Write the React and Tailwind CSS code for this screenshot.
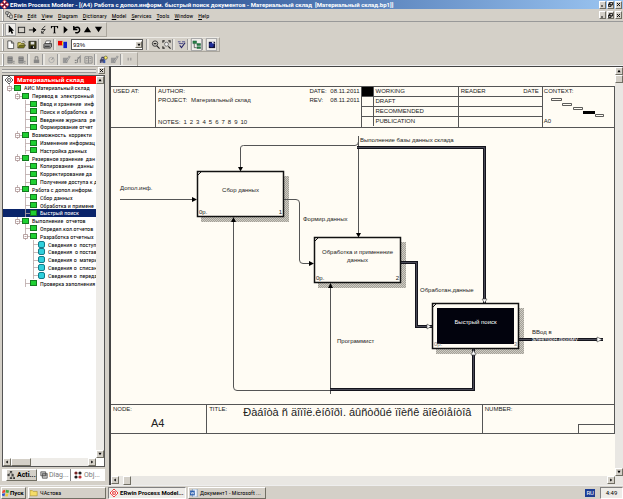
import React from 'react';

const raised = 'border border-t-white border-l-white border-r-[#716f64] border-b-[#716f64] bg-[#d4d0c8]';
const sunken = 'border border-t-[#808080] border-l-[#808080] border-r-white border-b-white bg-[#eeece8]';
const narrow = "font-['Liberation_Sans_Narrow','Roboto_Condensed',Roboto,sans-serif] text-[6px]";

const ICONS = {
  pointer: <path d="M3 0v9l2-2 1.500 3 1.500-1-1.500-2.500H9z" fill="#000" />,
  box: <rect x="1.500" y="2.500" width="7" height="6" fill="none" stroke="#222" />,
  arrow: <path d="M1 5.500h5M6 3l3 2.500L6 8z" fill="#000" stroke="#000" strokeWidth="1" />,
  bolt: <path d="M7 1L3 5h4L3 9M3 6.500V9h2.500" fill="none" stroke="#222" />,
  text: <path d="M1 1h8v2.500H8L7.500 2H5.700v6.500h1v.7H3.300v-.7h1V2H2.500L2 3.500H1z" fill="#000" />,
  play: <path d="M3 1l4.500 4.200L3 9.500z" fill="#000" />,
  undo: <path d="M2 1v4h4M2.500 4.500C4 1.500 8.500 2 8.500 5.500c0 2.500-2.500 3.500-5 3" fill="none" stroke="#000" strokeWidth="1.600" />,
  up: <path d="M5 2l4 6H1z" fill="#000" />,
  down: <path d="M5 8L1 2h8z" fill="#000" />,
  page: <path d="M2 1h4l2.500 2.500V9.500H2zM6 1v2.500h2.500" fill="#fff" stroke="#333" strokeWidth=".8" />,
  open: <g><path d="M1 9V3h3l1 1h3v2" fill="#e8dc70" stroke="#4a4600" strokeWidth=".8" /><path d="M1 9l2-3.500h6.500L7.500 9z" fill="#77741a" stroke="#333" strokeWidth=".6" /><path d="M6 2c1-1 2-1 3 1" fill="none" stroke="#222" strokeWidth=".7" /></g>,
  save: <g><path d="M1 1.500h8v8H1z" fill="#45451a" stroke="#111" strokeWidth=".8" /><path d="M3 2h4v3H3z" fill="#ddd" /><path d="M3 6.500h4v3H3z" fill="#111" /><path d="M5.500 7h1v2h-1z" fill="#eee" /></g>,
  print: <g><path d="M3.500 1h5L7 4.500H2z" fill="#fff" stroke="#333" strokeWidth=".7" /><path d="M1 5l1-1h7.500v3.500L8 9H1z" fill="#999" stroke="#222" strokeWidth=".8" /><path d="M2 7h5.500" stroke="#222" /></g>,
  model: <g><path d="M0 1h5v5H0z" fill="#e00" /><path d="M4.500 1.500l2 2-2 3z" fill="#fd0" /><path d="M6 2h4v7H6z" fill="#12c" /></g>,
  zoom: <g><circle cx="4.500" cy="4" r="3" fill="none" stroke="#333" /><path d="M3 4h3M6.500 6.500l3 3" stroke="#222" strokeWidth="1.300" /></g>,
  fit: <g><path d="M1 3V1h2M7 1h2v2M1 7v2h2" fill="none" stroke="#222" strokeWidth="1.200" /><circle cx="5" cy="4.700" r="2.200" fill="#eee" stroke="#444" strokeWidth=".7" /><path d="M7 7l2.500 2.500" stroke="#222" strokeWidth="1.300" /></g>,
  check: <g><path d="M1 2h3M5.500 2H9M2 4h5" stroke="#448" /><path d="M3 6l2 2.500L9 3" fill="none" stroke="#226" strokeWidth="1.200" /></g>,
  tree: <g><path d="M1 1h4v3H1zM5.500 4h4v2h-4zM5.500 7.500h4v2h-4z" fill="#278044" stroke="#153" strokeWidth=".5" /><path d="M2.500 4v4.500H5" fill="none" stroke="#222" strokeWidth=".7" /></g>,
  globe: <g><path d="M2 2h7v7H2z" fill="#113" /><circle cx="5" cy="5.500" r="2.600" fill="#1f2e9a" /><path d="M5 1l4 3H6z" fill="#eef" /></g>,
  barrel: <g><path d="M2 2h5v7H2z" fill="#999" stroke="#777" strokeWidth=".7" /><path d="M2 4h5M2 6h5" stroke="#666" strokeWidth=".7" /><path d="M8 7h1.500M8 9h1.500" stroke="#777" /></g>,
  lock: <g><path d="M2 5h6v4H2z" fill="#888" /><path d="M3.500 5V2h3v3" fill="none" stroke="#777" /></g>,
  circle: <g><circle cx="5" cy="5.500" r="3" fill="none" stroke="#aaa" /><path d="M5 5.500L7 3" stroke="#888" /></g>,
  edit: <g><path d="M1 3h5v6H1z" fill="#999" /><path d="M4 7l4-6 1 1-4 6z" fill="#ccc" stroke="#777" strokeWidth=".7" /></g>,
  sort: <path d="M2 8.500h2M2 6h2M5 8.500V5L8 1.500v7M5 3h2" fill="none" stroke="#888" strokeWidth="1.200" />,
  book: <path d="M1 2h8v7H1zM5 2v7M2 4h2M6 4h2M2 6.500h2M6 6.500h2" fill="none" stroke="#888" />,
  find: <g><path d="M1 9V6l2-4h3v7z" fill="#446" /><path d="M2 8h3M3 4h2" stroke="#aac" /><path d="M5 5h2v4H5z" fill="#35a" /><circle cx="7.500" cy="3" r="1.800" fill="#fe6" stroke="#553" strokeWidth=".7" /></g>,
  marks: <path d="M3 3h1v3H3zM6 3h1v3H6z" fill="#888" />,
  logo: <g><path d="M5 0l2 2-2 2-2-2zM5 6l2 2-2 2-2-2zM2 3l2 2-2 2-2-2zM8 3l2 2-2 2-2-2z" fill="#fff" stroke="#e22" strokeWidth="1.100" /></g>,
  doc: <path d="M1 1h3v3H1zM6 5h3v4H6zM3 4v3h3M5 1l3 3" fill="#fff" stroke="#222" strokeWidth=".9" />,
  acti: <path d="M4 0h2v2H4zM1 4h2v2H1zM6 4h2v2H6zM4 8h2v2H4zM8 8h2v2H8zM5 2L2 4M5 2l2 2M7 6L5 8M7 6l2 2" fill="#333" stroke="#333" strokeWidth=".6" />,
  diag: <path d="M1 1h6v5H1zM3 3h6v6H3zM3 5h6" fill="#ccc" stroke="#444" strokeWidth=".9" />,
  obj: <g><circle cx="2.500" cy="2.500" r="2" fill="#722" /><circle cx="7.500" cy="2.500" r="2" fill="#222" /><circle cx="2.500" cy="7.500" r="2" fill="#222" /><circle cx="7.500" cy="7.500" r="2" fill="#b33" /></g>,
  folder: <path d="M0 8.500V2h3l1 1h5v5.500z" fill="#f4dc68" stroke="#a58a20" strokeWidth=".7" />,
  word: <g><path d="M3 0h6v10H3z" fill="#eef4ff" stroke="#68a" strokeWidth=".7" /><path d="M0 2h6v6H0z" fill="#2b5fae" /><path d="M1 3.500l1 3 1-2.500 1 2.500 1-3" fill="none" stroke="#fff" strokeWidth=".7" /></g>,
  flag: <g><path d="M1 2l3-1v3.500L0 5z" fill="#e43" /><path d="M5 1l4 1-1 3-3.500-.5z" fill="#4a4" /><path d="M0 6l4-.7L3 9 0 8z" fill="#35c" /><path d="M4.500 5.500L8 6 7 9.500 4 9z" fill="#ec3" /></g>,
  minimize: <path d="M2 8h4" stroke="#000" strokeWidth="2" />,
  restore: <path d="M3 1h6v5H3zM1 4h5v5H1z" fill="#d4d0c8" stroke="#000" strokeWidth="1.500" />,
  close: <path d="M2 2l6 6M8 2L2 8" stroke="#000" strokeWidth="1.800" />,
  left: <path d="M7 1v8L2 5z" fill="#000" />,
  right: <path d="M3 1v8l5-4z" fill="#000" />,
};

function Icon({ name, className = 'size-[10px]' }) {
  return (
    <svg viewBox="0 0 10 10" aria-hidden="true" className={`shrink-0 ${className}`}>
      {ICONS[name]}
    </svg>
  );
}

const Grip = () => <span className="mr-px h-[12px] w-[2px] shrink-0 border-l border-white bg-[#999]" />;
const Sep = () => <span className="mr-px h-[11px] w-[3px] shrink-0 border-l border-[#999] bg-[#e8e6e0]" />;

function Tool({ icon, label, pressed }) {
  return (
    <button
      type="button"
      aria-label={label}
      className={`flex h-[13px] w-[11px] shrink-0 items-center justify-center ${pressed ? 'bg-[#efede9] outline outline-1 -outline-offset-1 outline-[#aaa]' : ''}`}
    >
      <Icon name={icon} className="size-[9px]" />
    </button>
  );
}

function Bar({ children }) {
  return (
    <div className="flex h-[15px] w-fit items-center border-t border-r border-b border-[#aaa69d] border-t-[#eceae5] pr-[2px] pl-[2px]">
      {children}
    </div>
  );
}

function ScrollButton({ icon, label, className = 'size-[8px]' }) {
  return (
    <button type="button" aria-label={label} className={`flex shrink-0 items-center justify-center ${raised} ${className}`}>
      <Icon name={icon} className="size-[4px]" />
    </button>
  );
}

function WindowButtons() {
  return (
    <div className="ml-auto flex gap-px pr-px">
      {['minimize', 'restore', 'close'].map((n) => (
        <button key={n} type="button" aria-label={n} className={`flex h-[8px] w-[7px] items-center justify-center ${raised}`}>
          <Icon name={n} className="size-[5px]" />
        </button>
      ))}
    </div>
  );
}

const TREE = [
  [0, 'АИС Материальный склад', 'open'],
  [1, 'Перевод в  электронный', 'open'],
  [2, 'Ввод и хранение  инф'],
  [2, 'Поиск и обработка  и'],
  [2, 'Введение журнала  ре'],
  [2, 'Формирование отчет'],
  [1, 'Возможность  корректи', 'open'],
  [2, 'Изменение информац'],
  [2, 'Настройка данных'],
  [1, 'Резервное хранение  дан', 'open'],
  [2, 'Копирование   данны'],
  [2, 'Корректирование да'],
  [2, 'Получение доступа к д'],
  [1, 'Работа с допол.информ.', 'open'],
  [2, 'Сбор данных'],
  [2, 'Обработка и примене'],
  [2, 'Быстрый поиск', 'selected'],
  [1, 'Выполнение  отчетов', 'open'],
  [2, 'Определ.кол.отчетов'],
  [2, 'Разработка отчетных', 'open'],
  [3, 'Сведения о  поступ'],
  [3, 'Сведения  о постав'],
  [3, 'Сведения о  матери'],
  [3, 'Сведения о  списан'],
  [3, 'Сведения о  переда'],
  [2, 'Проверка заполнения'],
];
const INDENT = ['pl-[3px]', 'pl-[11px]', 'pl-[19px]', 'pl-[27px]'];

function TreeRow({ depth, label, state }) {
  const selected = state === 'selected';
  return (
    <li className={`flex min-h-0 items-center whitespace-pre ${INDENT[depth]} ${selected ? 'bg-[#0a246a] text-white' : ''}`}>
      <svg viewBox="0 0 8 8" aria-hidden="true" className="size-[8px] shrink-0">
        <path d="M3.500 0v8M3.500 4.500H8" stroke="#b9a7a7" fill="none" strokeWidth=".8" />
        {state === 'open' && <path d="M1.500 2.500h4v4h-4zM2.500 4.500h2" fill="#fff" stroke="#a88f8f" strokeWidth=".8" />}
      </svg>
      {depth === 3 ? (
        <span className="mr-[3px] size-[7px] shrink-0 rounded-[2px] border border-[#167a88] bg-[#2fd0dc]" />
      ) : (
        <span className="mr-[3px] h-[6px] w-[7px] shrink-0 border border-[#147a20] bg-[#1fd032]" />
      )}
      <span>{label}</span>
    </li>
  );
}

function Explorer() {
  return (
    <aside className="flex w-[105px] shrink-0 flex-col pl-[2px] font-[Roboto,sans-serif]">
      <div className="flex h-[9px] items-center gap-[2px]">
        <div className="h-[4px] flex-1 border-y border-[#999] bg-[#e8e6e0]" />
        <button type="button" aria-label="Close panel" className={`flex size-[7px] items-center justify-center ${raised}`}>
          <Icon name="close" className="size-[5px]" />
        </button>
      </div>
      <div className="flex min-h-0 flex-1 flex-col border border-[#555] bg-white">
        <div className="flex min-h-0 flex-1">
          <div className="min-w-0 flex-1 overflow-hidden">
            <div className="flex h-[8px] items-center bg-[#f00] font-['Noto_Sans'] text-[6px] font-bold whitespace-nowrap text-white">
              <span className="mr-[3px] flex h-[8px] w-[11px] items-center justify-center bg-white">
                <svg viewBox="0 0 10 10" aria-hidden="true" className="size-[8px]">
                  <path d="M5 0l2 2-2 2-2-2zM5 6l2 2-2 2-2-2zM2 3l2 2-2 2-2-2zM8 3l2 2-2 2-2-2z" fill="#fff" stroke="#333" />
                </svg>
              </span>
              Материальный склад
            </div>
            <ul className={`grid h-[203px] auto-rows-fr leading-[7px] ${narrow}`}>
              {TREE.map(([depth, label, state], i) => (
                <TreeRow key={i} depth={depth} label={label} state={state} />
              ))}
            </ul>
          </div>
          <div className="flex w-[8px] flex-col justify-between bg-[#eeece8]">
            <ScrollButton icon="up" label="Scroll up" />
            <ScrollButton icon="down" label="Scroll down" />
          </div>
        </div>
        <div className="mr-[8px] flex h-[8px] bg-[#eeece8]">
          <ScrollButton icon="left" label="Scroll left" />
          <span className={`w-[20px] ${raised}`} />
          <span className="flex-1" />
          <ScrollButton icon="right" label="Scroll right" />
        </div>
      </div>
      <div className="mt-[2px] mb-[4px] flex h-[12px] bg-white pl-[4px] text-[7px] text-[#777]" role="tablist">
        <button type="button" role="tab" className={`flex w-[31px] items-center gap-[2px] font-bold text-black ${raised}`}>
          <Icon name="acti" className="size-[8px]" />Acti...
        </button>
        <button type="button" role="tab" className="flex w-[34px] items-center gap-px border-r border-[#888] pl-[3px]">
          <Icon name="diag" className="size-[8px]" />Diag...
        </button>
        <button type="button" role="tab" className="flex flex-1 items-center gap-[2px] pl-[3px]">
          <Icon name="obj" className="size-[8px]" />Obj...
        </button>
      </div>
    </aside>
  );
}

function Header() {
  return (
    <div className="grid grid-cols-[44fr_206fr_96fr_84fr_72fr] border-y border-[#555] leading-[9px]">
      <div className="pl-[2px]">USED AT:</div>
      <div className="flex flex-col border-l border-[#555] px-[2px]">
        <div className="flex justify-between">
          <span>AUTHOR:</span>
          <span className="flex w-[50px] justify-between"><span>DATE:</span><span>08.11.2011</span></span>
        </div>
        <div className="flex justify-between">
          <span className="flex gap-[4px]"><span>PROJECT:</span><span>Материальный склад</span></span>
          <span className="flex w-[50px] justify-between"><span>REV:</span><span>08.11.2011</span></span>
        </div>
        <div className="mt-auto flex gap-[3px]">
          <span>NOTES:</span>
          {[1, 2, 3, 4, 5, 6, 7, 8, 9, 10].map((n) => <span key={n}>{n}</span>)}
        </div>
      </div>
      <div className="divide-y divide-[#555] border-l border-[#555]">
        {['WORKING', 'DRAFT', 'RECOMMENDED', 'PUBLICATION'].map((s, i) => (
          <div key={s} className="flex">
            <span className={`w-[12px] border-r border-[#555] ${i === 0 ? 'bg-black' : ''}`} />
            <span className="pl-px">{s}</span>
          </div>
        ))}
      </div>
      <div className="grid grid-rows-4 divide-y divide-[#555] border-l border-[#555]">
        <div className="flex justify-between pr-[3px] pl-[2px]"><span>READER</span><span>DATE</span></div>
        <div /><div /><div />
      </div>
      <div className="flex flex-col border-l border-[#555] pl-px">
        <span>CONTEXT:</span>
        <svg viewBox="0 0 60 21" aria-hidden="true" className="ml-[6px] h-[21px] w-[60px]">
          <path d="M1.500 2.500h10v2h-10zM12.500 7.500h9v2h-9zM23.500 11.500h9v2h-9zM45.500 18.500h8v2h-8z" fill="none" stroke="#333" strokeWidth=".8" />
          <path d="M33 15h12v3H33z" />
        </svg>
        <span>A0</span>
      </div>
    </div>
  );
}

function Heavy({ d }) {
  return (
    <g fill="none">
      <path d={d} stroke="#14141c" strokeWidth="3" />
      <path d={d} stroke="#4a4a56" strokeWidth="1" />
    </g>
  );
}

const ACTIVITIES = [
  [197, 170], [314, 236], [432, 302],
];

function Diagram() {
  return (
    <div className="relative h-[276px]">
      <svg viewBox="111 127 503 276" aria-hidden="true" className="block h-[276px] w-[503px]">
        <defs>
          <pattern id="shade" width="2" height="2" patternUnits="userSpaceOnUse">
            <path d="M0 0h2v2H0z" fill="#cfccc3" />
            <path d="M0 0h1v1H0zM1 1h1v1H1z" fill="#a3a098" />
          </pattern>
        </defs>
        {ACTIVITIES.map(([x, y]) => (
          <rect key={x} x={x + 4} y={y + 5} width="88" height="46" fill="url(#shade)" />
        ))}
        <g fill="none" stroke="#555">
          <path d="M120 198.500h72M240.500 166v-19q0-2.500 3-2.500H355q3.500 0 3.500-4M358.500 135v97" />
          <path d="M284 198.500h12q3.500 0 3.500 3.500v57q0 3.500 3.500 3.500h7" />
          <path d="M233.500 220v166q0 3.500 3.500 3.500h93.500M330.500 286v107" />
        </g>
        <path d="M192 196v5l5-2.500zM238 166h5l-2.500 4.500zM356 232h5l-2.500 4.500zM309 260v5l5-2.500zM231 221h5l-2.500-5zM328 287h5l-2.500-5z" />
        <Heavy d="M357 146.500h127.500V302" />
        <Heavy d="M401 261.500h15.500V325.500H432" />
        <Heavy d="M330 388.500h143.500V348" />
        <Heavy d="M518 338.500h85" />
        {ACTIVITIES.map(([x, y]) => (
          <g key={x}>
            <rect x={x + 0.5} y={y + 0.5} width="86" height="45" fill="#fffcf4" stroke="#111" strokeWidth="1.500" />
            <path d={`M${x} ${y + 5}l5-5`} stroke="#111" />
          </g>
        ))}
        <path d="M437 307h77v36h-77z" fill="#02030d" />
        <path d="M482 298h5l-2.500 4zM427 323v5l4-2.500zM471 354h5l-2.500-5zM597 336v5l5-2.500z" fill="#fff" stroke="#444" strokeWidth=".6" />
      </svg>
      <span className="absolute top-[56px] left-[9px]">Допол.инф.</span>
      <span className="absolute top-[8px] left-[249px]">Выполнение базы данных склада</span>
      <span className="absolute top-[87px] left-[192px]">Формир.данных</span>
      <span className="absolute top-[158px] left-[309px]">Обработан.данные</span>
      <span className="absolute top-[209px] left-[226px]">Программист</span>
      <span className="absolute top-[200px] left-[421px]">ВВод в</span>
      <span className="absolute top-[207px] left-[421px] text-white">электрон.форму</span>
      <div className="absolute top-[43px] left-[86px] flex h-[46px] w-[87px] flex-col justify-between px-[2px] pt-[15px] pb-px text-center">
        <span>Сбор данных</span>
        <span className="flex justify-between"><span>0р.</span><span>1</span></span>
      </div>
      <div className="absolute top-[109px] left-[203px] flex h-[46px] w-[87px] flex-col justify-between px-[2px] pt-[11px] pb-px text-center">
        <span>Обработка и применение<br />данных</span>
        <span className="flex justify-between"><span>0р.</span><span>2</span></span>
      </div>
      <div className="absolute top-[175px] left-[321px] flex h-[46px] w-[87px] flex-col justify-between px-[2px] pt-[15px] pb-px text-center">
        <span className="text-white">Быстрый поиск</span>
        <span className="flex justify-between text-[#777]"><span>0р.</span><span>3</span></span>
      </div>
    </div>
  );
}

function Canvas() {
  return (
    <main className="ml-[4px] flex min-w-0 flex-1 flex-col border-t border-l-2 border-[#444] bg-[#fffcf4] text-[6px] leading-[8px] text-[#222]">
      <div className="flex min-h-0 flex-1">
        <div className="min-w-0 flex-1 overflow-hidden">
          <div className="mt-[19px] border-r border-[#555]">
            <Header />
            <Diagram />
            <div className="grid h-[30px] grid-cols-[95fr_275fr_132fr] border-y border-[#555]">
              <div className="pl-[2px]">
                NODE:
                <div className="pl-[38px] text-[11px] leading-[20px]">A4</div>
              </div>
              <div className="flex gap-[16px] border-l border-[#555] pl-[2px]">
                TITLE:
                <span className="text-[11px] leading-[14px] whitespace-nowrap">Ðàáîòà ñ äîïîë.èíôîðì. áûñòðûé ïîèñê äîêóìåíòîâ</span>
              </div>
              <div className="flex flex-col justify-between border-l border-[#555] pl-[2px]">
                NUMBER:
                <span className="h-[9px] w-[36px] self-end border-t border-l border-[#555]" />
              </div>
            </div>
          </div>
        </div>
        <div className="flex w-[8px] flex-col bg-[#e9e7e3]">
          <ScrollButton icon="up" label="Scroll up" />
          <span className={`h-[8px] ${raised}`} />
          <span className="flex-1" />
          <ScrollButton icon="down" label="Scroll down" />
        </div>
      </div>
      <div className="flex h-[9px] bg-[#e9e7e3] pr-[8px]">
        <ScrollButton icon="left" label="Scroll left" />
        <span className={`ml-[4px] w-[8px] ${raised}`} />
        <span className="flex-1" />
        <ScrollButton icon="right" label="Scroll right" />
      </div>
    </main>
  );
}

function Task({ icon, children, active }) {
  return (
    <button type="button" className={`flex h-[12px] w-[78px] items-center gap-[2px] pl-px whitespace-nowrap ${active ? `font-bold ${sunken}` : `${narrow} ${raised}`}`}>
      <Icon name={icon} className="size-[8px]" />
      {children}
    </button>
  );
}

export default function App() {
  return (
    <div className="flex h-screen flex-col overflow-hidden bg-[#d4d0c8] font-['Liberation_Sans',sans-serif] text-[6px] text-black">
      <header className="flex h-[9px] shrink-0 items-center gap-px bg-linear-to-r from-[#0a2a72] to-[#9cc6f2] font-[Roboto,sans-serif] font-bold whitespace-pre text-white">
        <Icon name="logo" className="size-[9px]" />
        <h1>ERwin Process Modeler - [(A4) Работа с допол.информ. быстрый поиск документов - Материальный склад  [Материальный склад.bp1]]</h1>
        <WindowButtons />
      </header>
      <nav className={`flex h-[13px] shrink-0 items-center border-b border-[#999] pl-[2px] ${narrow}`}>
        <Grip />
        <Icon name="doc" className="size-[8px]" />
        <div className="ml-px flex gap-[5px]">
          {['File', 'Edit', 'View', 'Diagram', 'Dictionary', 'Model', 'Services', 'Tools', 'Window', 'Help'].map((m) => (
            <button key={m} type="button"><span className="underline">{m[0]}</span>{m.slice(1)}</button>
          ))}
        </div>
        <WindowButtons />
      </nav>
      <div className="flex h-[44px] shrink-0 flex-col border-b border-[#eee]">
        <Bar>
          <Grip />
          <Tool icon="pointer" label="Pointer" pressed />
          <Tool icon="box" label="Activity" />
          <Tool icon="arrow" label="Arrow" />
          <Tool icon="bolt" label="Squiggle" />
          <Tool icon="text" label="Text" />
          <Tool icon="play" label="Diagram manager" />
          <Tool icon="undo" label="Sibling" />
          <Tool icon="up" label="Parent" />
          <Tool icon="down" label="Child" />
        </Bar>
        <Bar>
          <Grip />
          <Tool icon="page" label="New" />
          <Tool icon="open" label="Open" />
          <Tool icon="save" label="Save" />
          <Sep />
          <Tool icon="print" label="Print" />
          <Sep />
          <Tool icon="model" label="Model Mart" />
          <span className="relative mx-[3px] flex">
            <select aria-label="Zoom" defaultValue="93%" className="h-[11px] w-[72px] appearance-none border border-[#555] bg-white pl-px text-[6px] leading-[8px]">
              <option>93%</option>
            </select>
            <span className={`pointer-events-none absolute top-[2px] right-px flex size-[7px] items-center justify-center ${raised}`}>
              <Icon name="down" className="size-[4px]" />
            </span>
          </span>
          <Sep />
          <Tool icon="zoom" label="Zoom in" />
          <Tool icon="fit" label="Fit" />
          <Sep />
          <Tool icon="check" label="Spelling" />
          <Sep />
          <Tool icon="tree" label="Model explorer" pressed />
          <Sep />
          <Tool icon="globe" label="Model mart" pressed />
        </Bar>
        <Bar>
          <Grip />
          <Tool icon="barrel" label="Check in" />
          <Tool icon="barrel" label="Check out" />
          <Sep />
          <Tool icon="lock" label="Lock" />
          <Sep />
          <Tool icon="circle" label="Refresh" />
          <Sep />
          <Tool icon="edit" label="Review" />
          <Tool icon="sort" label="Versions" />
          <Tool icon="book" label="Library" />
          <Sep />
          <Tool icon="find" label="Find" />
          <Tool icon="edit" label="Edit" />
          <Sep />
          <Tool icon="marks" label="Notes" />
        </Bar>
      </div>
      <div className="flex min-h-0 flex-1">
        <Explorer />
        <Canvas />
      </div>
      <footer className="flex h-[14px] shrink-0 items-center gap-[2px] border-t border-[#eee] pl-px font-[Roboto,sans-serif]">
        <button type="button" className={`flex h-[12px] w-[25px] items-center font-bold ${raised}`}>
          <Icon name="flag" className="size-[8px]" />Пуск
        </button>
        <Task icon="folder">ЧАстова</Task>
        <Task icon="logo" active>ERwin Process Model...</Task>
        <Task icon="word">Документ1 - Microsoft ...</Task>
        <span className="mr-[3px] ml-auto bg-[#1c3c92] px-px text-[6px] leading-[8px] text-white">RU</span>
        <time className={`flex h-[12px] w-[23px] items-center justify-center ${sunken}`}>4:49</time>
      </footer>
    </div>
  );
}
